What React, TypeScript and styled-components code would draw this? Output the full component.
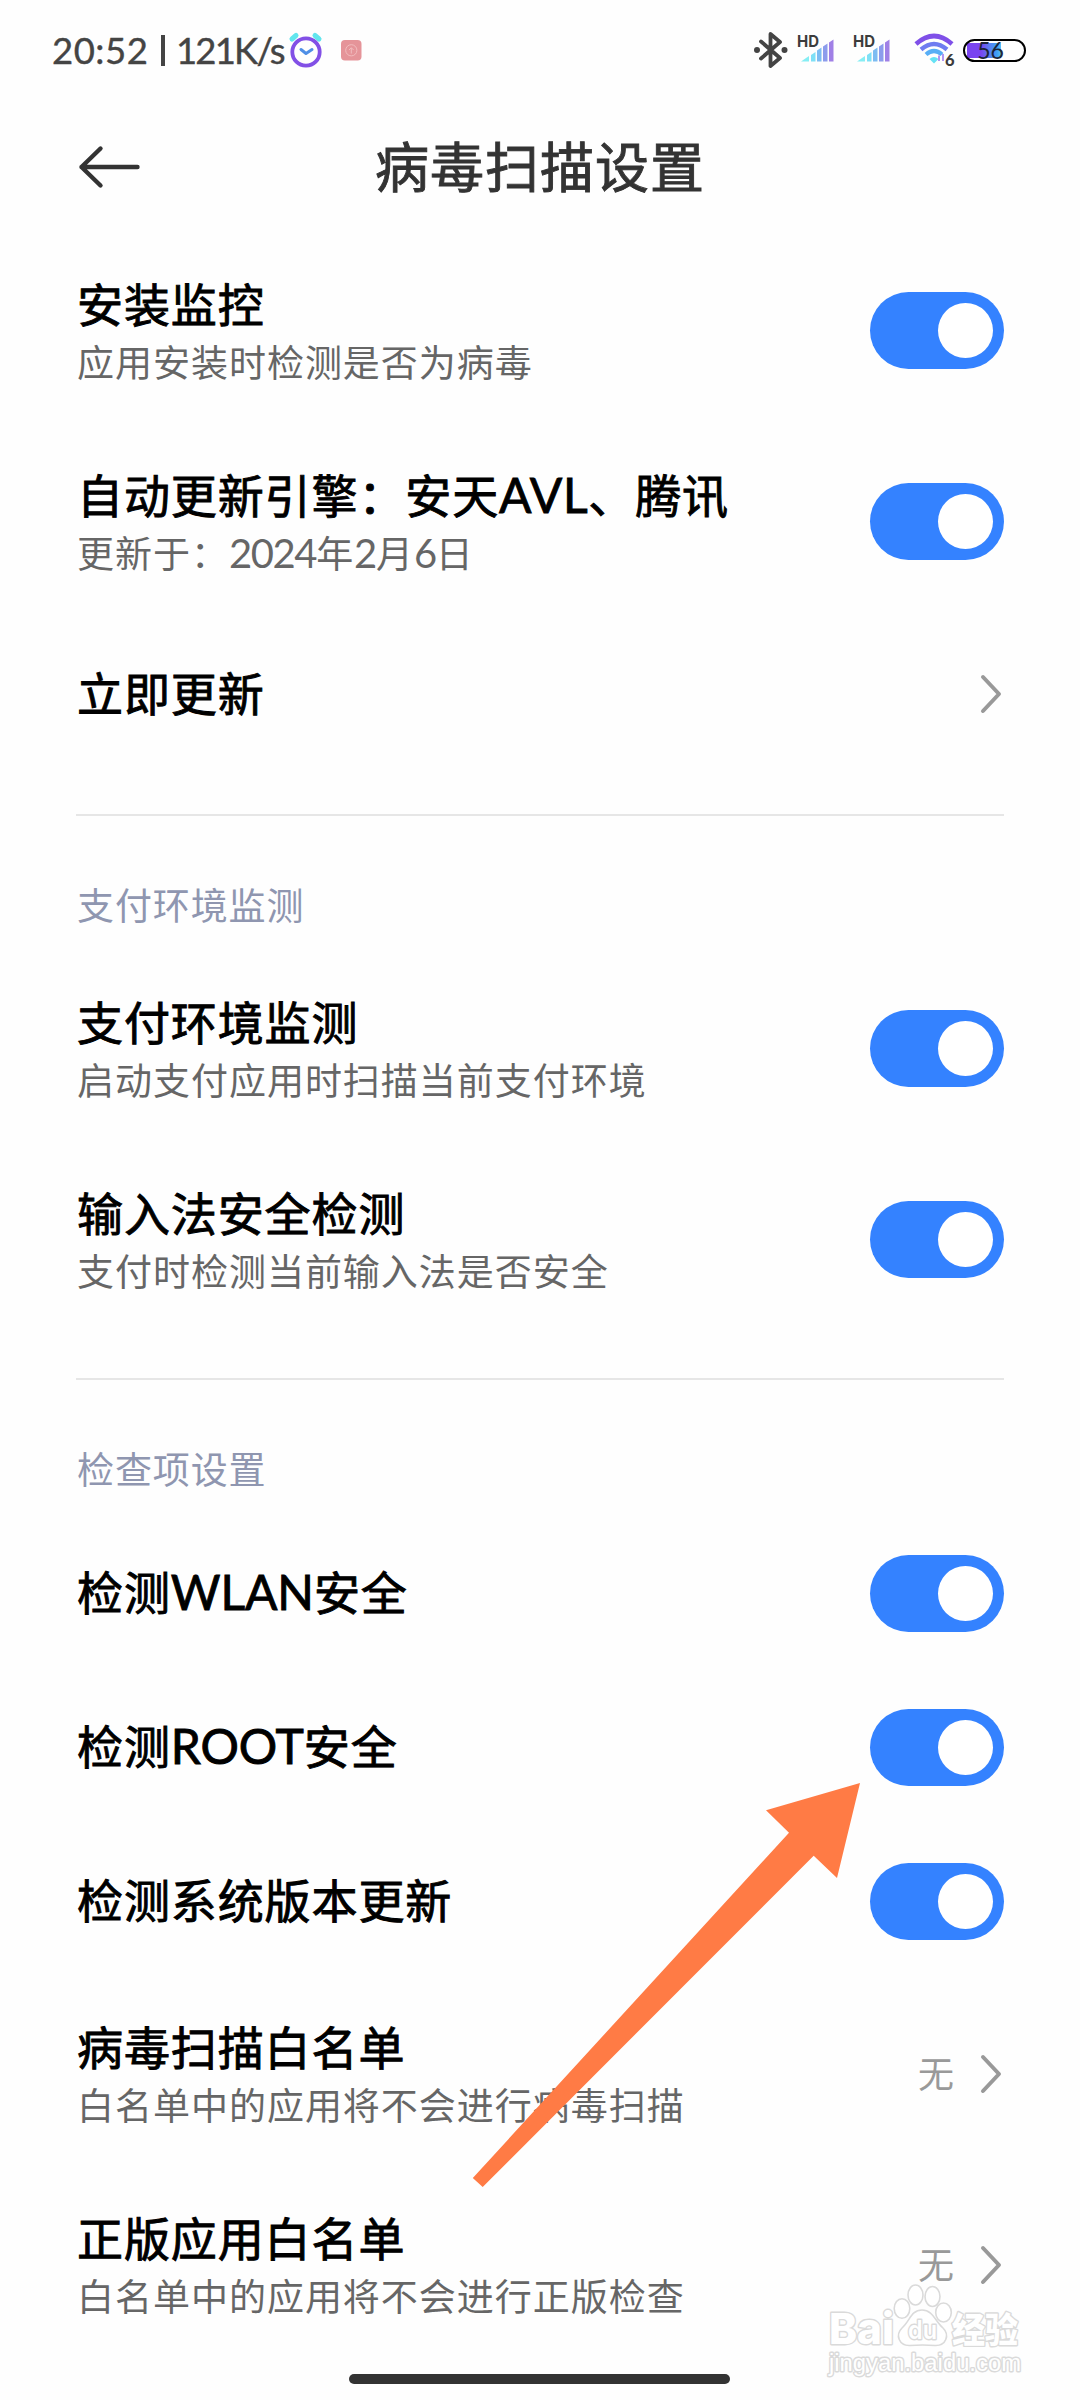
import React, { useState } from 'react';
import styled, { createGlobalStyle } from 'styled-components';

const GlobalStyle = createGlobalStyle`
  * { box-sizing: border-box; }
  body { margin: 0; background: #fefefe; }
`;

const cjk = `"Noto Sans CJK SC", "Noto Sans", sans-serif`;

const Screen = styled.div`
  position: relative;
  width: 1080px;
  height: 2400px;
  overflow: hidden;
  display: flex;
  flex-direction: column;
  background: #fefefe;
  font-family: ${cjk};
  color: #000;
`;

const StatusBar = styled.header`
  display: flex;
  align-items: center;
  justify-content: space-between;
  height: 100px;
  padding: 0 54px 0 52px;
`;

const StatusGroup = styled.div`
  display: flex;
  align-items: center;
  height: 100px;
`;

const Clock = styled.div`
  display: flex;
  align-items: center;
  width: 236px;
  font: 400 36.5px/44px Lato, sans-serif;
  color: #444;
  white-space: nowrap;
  -webkit-text-stroke: 0.4px #444;
`;

const ClockPart = styled.span<{ $width: number; $spacing?: number }>`
  width: ${(p) => p.$width}px;
  letter-spacing: ${(p) => p.$spacing ?? 0}px;
`;

const ClockDivider = styled.i`
  width: 4px;
  height: 31px;
  margin-right: 11px;
  background: #444;
`;

const StatusIcon = styled.svg<{ $gap?: number }>`
  display: block;
  flex: none;
  margin-left: ${(p) => p.$gap ?? 0}px;
`;

const Battery = styled.div`
  display: flex;
  align-items: center;
  justify-content: center;
  width: 63px;
  height: 23px;
  margin-left: 3px;
  padding-right: 8px;
  border: 2px solid #000;
  border-radius: 12px;
  background: linear-gradient(90deg, #7a44f0 0 14px, #5a7cf2 22px, #3fa0f5 30px, #58c0f8 34px, transparent 34px) 2px 2px / 55px 15px no-repeat;
  font: 400 23px/19px Lato, sans-serif;
  color: #1c2438;
`;

const TitleBar = styled.div`
  display: grid;
  grid-template-columns: 64px 1fr 64px;
  align-items: center;
  height: 135px;
  padding: 0 76px;
`;

const Heading = styled.h1`
  margin: -6px 0 0;
  font-size: 54px;
  font-weight: 400;
  line-height: 70px;
  letter-spacing: 1px;
  text-align: center;
  color: #333;
  -webkit-text-stroke: 0.9px #333;
`;

const BackButton = styled.button`
  display: block;
  width: 64px;
  height: 48px;
  margin-top: -1px;
  padding: 0;
  border: 0;
  background: none;
`;

const Row = styled.div<{ $tall?: boolean }>`
  display: flex;
  align-items: center;
  justify-content: space-between;
  height: ${(p) => (p.$tall ? 191 : 154)}px;
  padding: 0 76px 0 77px;
`;

const RowText = styled.div<{ $tall?: boolean }>`
  display: flex;
  flex-direction: column;
  padding-top: ${(p) => (p.$tall ? 6 : 4)}px;
  white-space: nowrap;
`;

const Label = styled.div`
  margin-top: -5px;
  padding-bottom: 5px;
  font-size: 46px;
  line-height: 57px;
  letter-spacing: 0.9px;
  -webkit-text-stroke: 0.9px #000;
`;

const Note = styled.div`
  margin-top: -2px;
  font-size: 37px;
  line-height: 54px;
  letter-spacing: 0.98px;
  color: #666;
`;

const Latin = styled.span<{ $size: number; $spacing: number }>`
  font-family: Lato, sans-serif;
  font-size: ${(p) => p.$size}px;
  letter-spacing: ${(p) => p.$spacing}px;
  line-height: 1;
`;

const SectionTitle = styled.h2<{ $height: number }>`
  height: ${(p) => p.$height}px;
  margin: 0;
  padding: 61px 77px 0;
  font-size: 37px;
  font-weight: 400;
  line-height: 54px;
  letter-spacing: 0.9px;
  color: #8f96b0;
`;

const Divider = styled.hr`
  width: 928px;
  height: 2px;
  margin: 43px auto 0;
  border: 0;
  background: #e6e6e6;
`;

const Track = styled.button<{ $on: boolean }>`
  display: flex;
  align-items: center;
  justify-content: ${(p) => (p.$on ? 'flex-end' : 'flex-start')};
  width: 134px;
  height: 77px;
  padding: 0 11px;
  border: 0;
  border-radius: 39px;
  background: ${(p) => (p.$on ? '#3482ff' : '#e6e6e6')};
`;

const Knob = styled.span`
  width: 55px;
  height: 55px;
  border-radius: 50%;
  background: #fff;
`;

const Trailing = styled.div`
  display: flex;
  align-items: center;
  gap: 25px;
`;

const Value = styled.span`
  margin-top: -4px;
  font-size: 36px;
  line-height: 54px;
  color: #999;
`;

const PointerArrow = styled.svg`
  position: absolute;
  left: 470px;
  top: 1780px;
`;

const Watermark = styled.svg`
  position: absolute;
  left: 820px;
  top: 2275px;
`;

const HomeBar = styled.div`
  width: 381px;
  height: 10px;
  margin: 14px auto 0 349px;
  border-radius: 5px;
  background: #333;
`;

function Switch() {
  const [on, setOn] = useState(true);
  return (
    <Track $on={on} role="switch" aria-checked={on} onClick={() => setOn(!on)}>
      <Knob />
    </Track>
  );
}

function Chevron() {
  return (
    <svg width="25" height="44" viewBox="0 0 25 44" fill="none" stroke="#999" strokeWidth="4" strokeLinecap="round" strokeLinejoin="round">
      <path d="M4 5 L20 22 L4 39" />
    </svg>
  );
}

function Item({ title, note, value, link }: { title: React.ReactNode; note?: React.ReactNode; value?: string; link?: boolean }) {
  return (
    <Row $tall={!!note}>
      <RowText $tall={!!note}>
        <Label>{title}</Label>
        {note && <Note>{note}</Note>}
      </RowText>
      {link ? (
        <Trailing>
          {value && <Value>{value}</Value>}
          <Chevron />
        </Trailing>
      ) : (
        <Switch />
      )}
    </Row>
  );
}

function Alarm() {
  return (
    <StatusIcon width="36" height="38" viewBox="0 0 36 38" fill="none" strokeLinecap="round">
      <path d="M4 8 L8 4.500 M27 4.500 L31 8" stroke="#62e6ee" strokeWidth="5" />
      <circle cx="18" cy="21" r="13.700" stroke="#8250e6" strokeWidth="3.800" />
      <path d="M13 18.500 L18 22.500 L24 18.500" stroke="#4f8fe6" strokeWidth="3" strokeLinejoin="round" />
    </StatusIcon>
  );
}

function Recorder() {
  return (
    <StatusIcon $gap={17} width="21" height="21" viewBox="0 0 21 21" fill="none">
      <rect width="20.500" height="20.500" rx="4" fill="#e59499" />
      <circle cx="10.300" cy="10.300" r="5.600" stroke="#f2bcbe" strokeWidth="1" />
      <path d="M10.300 13.500 V8 M8 10 L10.300 7.700 L12.600 10" stroke="#f2bcbe" strokeWidth="1" />
    </StatusIcon>
  );
}

function Bluetooth() {
  return (
    <StatusIcon width="34" height="38" viewBox="0 0 34 38" fill="none" stroke="#444" strokeWidth="3.800" strokeLinejoin="round" strokeLinecap="round">
      <path d="M7 10.500 L26 27 L16.500 35 V3 L26 11 L7 27.500" />
      <circle cx="3" cy="19" r="3" fill="#444" stroke="none" />
      <circle cx="30.500" cy="19" r="3" fill="#444" stroke="none" />
    </StatusIcon>
  );
}

function Signal({ gap }: { gap: number }) {
  return (
    <StatusIcon $gap={gap} width="38" height="42" viewBox="0 -6 38 42">
      <text x="0" y="11.500" fontFamily="Inter, sans-serif" fontWeight="700" fontSize="15.500" textLength="22" lengthAdjust="spacingAndGlyphs" fill="#3c3c3c">HD</text>
      <path d="M4 26.500 L12 21 V26.500 Z" fill="#86eef4" />
      <path d="M14 20 L18.500 17 V26.500 H14 Z" fill="#7ee0f6" />
      <path d="M20 15.500 L24.500 12.500 V26.500 H20 Z" fill="#7cbcf2" />
      <path d="M26 11.500 L30.500 8.500 V26.500 H26 Z" fill="#8c9cec" />
      <path d="M32 7.500 L36.500 4.500 V26.500 H32 Z" fill="#a080e6" />
    </StatusIcon>
  );
}

function Wifi() {
  return (
    <StatusIcon $gap={23} width="46" height="46" viewBox="0 -6 46 46" fill="none">
      <path d="M2 11 Q20 -5 38 11" stroke="#7f50e8" strokeWidth="4.600" />
      <path d="M7 16.500 Q20 5.500 33 16.500" stroke="#6f7cf0" strokeWidth="4.400" />
      <path d="M12 21.500 Q20 14.500 28 21.500" stroke="#58aef6" strokeWidth="4.200" />
      <path d="M15.500 26 Q20 22 24.500 26 L20 30.500 Z" fill="#66e2f4" />
      <path d="M25 28 V22.500 M29 21 V28" stroke="#a07cf0" strokeWidth="1.600" />
      <text x="31" y="33" fontFamily="Lato, sans-serif" fontWeight="900" fontSize="16.500" fill="#3c3c3c">6</text>
    </StatusIcon>
  );
}

function BaiduMark() {
  return (
    <Watermark width="210" height="115" viewBox="0 0 210 115" fill="#fff" stroke="#dadada" strokeWidth="1.600" strokeLinejoin="round">
      <ellipse cx="82" cy="33.500" rx="7.800" ry="9.800" />
      <ellipse cx="95.500" cy="20" rx="7.500" ry="10" />
      <ellipse cx="112.500" cy="21.500" rx="7.500" ry="10" />
      <ellipse cx="123.500" cy="37.500" rx="7.800" ry="9.500" />
      <path d="M102 35 C91 35 90 46 82 53 C75 60 79 71 90 70.500 C96 70 109 70 115 70.500 C126 71 130 60 123 53 C115 46 113 35 102 35 Z" />
      <g fontFamily="Inter, sans-serif" fontWeight="800" paintOrder="stroke" strokeWidth="2.800">
        <text x="9" y="69" fontSize="43" textLength="65" lengthAdjust="spacingAndGlyphs">Bai</text>
        <text x="88" y="64" fontSize="25" fontWeight="600" textLength="29" lengthAdjust="spacingAndGlyphs">du</text>
        <text x="132" y="68" fontSize="35" fontFamily="Noto Sans CJK SC, sans-serif" textLength="66" lengthAdjust="spacingAndGlyphs">经验</text>
        <text x="9" y="96" fontSize="23" fontWeight="500" fontFamily="Liberation Sans, sans-serif" textLength="192" lengthAdjust="spacingAndGlyphs">jingyan.baidu.com</text>
      </g>
    </Watermark>
  );
}

export default function App() {
  return (
    <Screen>
      <GlobalStyle />
      <StatusBar>
        <StatusGroup>
          <Clock>
            <ClockPart $width={109} $spacing={0.5}>20:52</ClockPart>
            <ClockDivider />
            <ClockPart $width={112} $spacing={-1.8}>121K/s</ClockPart>
          </Clock>
          <Alarm />
          <Recorder />
        </StatusGroup>
        <StatusGroup>
          <Bluetooth />
          <Signal gap={9} />
          <Signal gap={18} />
          <Wifi />
          <Battery>56</Battery>
        </StatusGroup>
      </StatusBar>

      <TitleBar>
        <BackButton aria-label="返回">
          <svg width="64" height="48" viewBox="0 0 64 48" fill="none" stroke="#333" strokeWidth="4.400" strokeLinecap="round" strokeLinejoin="round">
            <path d="M61.500 24 H5.500 M24.500 5.500 L5.500 24 L24.500 42.500" />
          </svg>
        </BackButton>
        <Heading>病毒扫描设置</Heading>
      </TitleBar>

      <Item title="安装监控" note="应用安装时检测是否为病毒" />
      <Item
        title={<>自动更新引擎：安天<Latin $size={48} $spacing={0.7}>AVL</Latin>、腾讯</>}
        note={<>更新于：<Latin $size={40} $spacing={-1.4}>2024</Latin>年<Latin $size={40} $spacing={-1.4}>2</Latin>月<Latin $size={40} $spacing={-1.4}>6</Latin>日</>}
      />
      <Item title="立即更新" link />
      <Divider />

      <SectionTitle $height={137}>支付环境监测</SectionTitle>
      <Item title="支付环境监测" note="启动支付应用时扫描当前支付环境" />
      <Item title="输入法安全检测" note="支付时检测当前输入法是否安全" />
      <Divider />

      <SectionTitle $height={136}>检查项设置</SectionTitle>
      <Item title={<>检测<Latin $size={48} $spacing={-0.1}>WLAN</Latin>安全</>} />
      <Item title={<>检测<Latin $size={48} $spacing={-0.1}>ROOT</Latin>安全</>} />
      <Item title="检测系统版本更新" />
      <Item title="病毒扫描白名单" note="白名单中的应用将不会进行病毒扫描" value="无" link />
      <Item title="正版应用白名单" note="白名单中的应用将不会进行正版检查" value="无" link />
      <HomeBar />

      <PointerArrow width="394" height="412" viewBox="470 1780 394 412">
        <path d="M860 1783 L766 1810.300 L789 1832.700 L472.800 2178 L482.700 2187 L813.700 1855.700 L837 1878 Z" fill="#ff7b45" />
      </PointerArrow>
      <BaiduMark />
    </Screen>
  );
}
